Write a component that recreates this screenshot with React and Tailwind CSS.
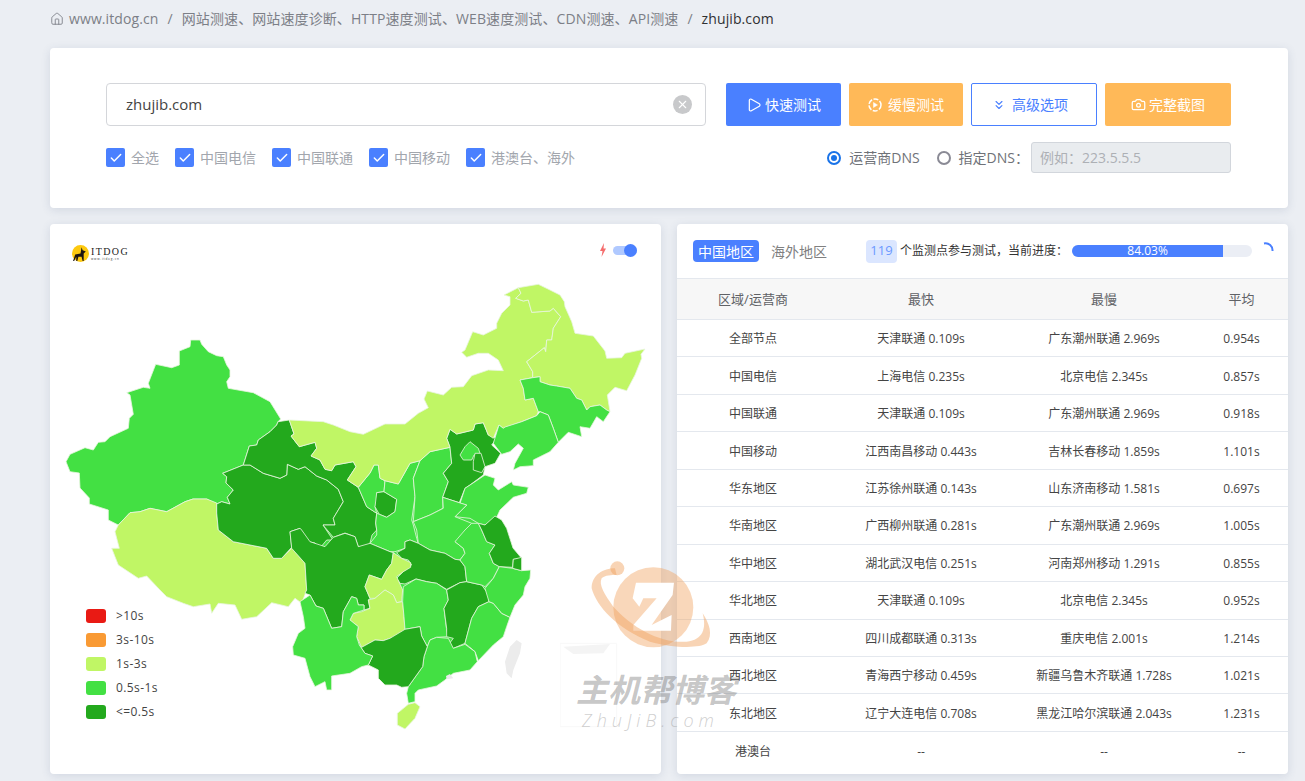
import { Play, ChevronsDown, Camera, House, Check, X } from 'lucide-react'

const DARK = '#23a91d'
const MID = '#43e043'
const LIGHT = '#c0f665'

// provinces, page coordinates
const north = [
  // backing so no slivers of white show between the central provinces
  [MID, '358,487 414,480 450,500 475,515 510,540 513,570 480,640 420,680 350,660 310,610 307,545'],
  [MID, '190.7,340 200,340 201.7,344.3 208.3,351.7 216.7,355.7 223.3,356.7 226.7,365 230,370 230,376.7 226.7,381.7 228.3,388.3 253.3,392.7 270,401.7 280.7,419 278,421.7 276.7,425 270,431.7 258.3,440 256.7,445 249.3,446 243.3,465 222.7,473.3 226.7,476.7 226,483 233.3,490 227.3,497.3 230,504 221.7,501.7 216.7,504 206.7,499 193,499 185,501.7 166.7,511.7 150,508.3 140,511.7 130,512.7 118.3,525 108.3,520 108.3,510 89.3,504 89.3,498 80,488 79.3,473 70,471.7 66,461.7 70,454.3 85,447.7 93.3,450 98.3,442.3 105,441.7 110,436.7 128.3,428.3 129.3,418.3 133.3,414.3 130,395 126.7,392.7 143.3,387.3 150,388.3 148.3,383.3 155.7,364.3 171.7,367.7 179.3,365 179.3,351 190,346.7'],
  [LIGHT, '185,501.7 193,499 206.7,499 216.7,503 216.7,513.3 218.3,530 233.3,541.7 250,545 266.7,548.3 273.3,558.3 281.7,558.3 290,550 291.7,547.3 305,563.3 306.7,590 301.7,603.3 295,598.3 288.3,606.7 271.7,602.7 256.7,616.7 241.7,619.3 235,605 218.3,603.3 211.7,613.3 210,604 193.3,606.7 183.3,603.3 166.7,596.7 160,590 146.7,576 138.3,578.3 118.3,565 115,556.7 111.7,548.3 119.3,548.3 115,531.7 118.3,525 130,512.7 140,511.7 150,508.3 166.7,511.7'],
  [DARK, '222.7,473.3 243.3,465 250,465 263.3,473.3 280,478.3 286.7,475 287.3,464.3 298.3,469.3 305,466.7 316.7,476 326.7,480 338.3,489.3 343.3,501.7 333.3,518.3 335,525 323,525 333,540 326.7,540 320,548 315,543 308,541.7 300,528.3 290,531.7 291.7,547.3 281.7,558.3 273.3,558.3 266.7,548.3 250,545 233.3,541.7 218.3,530 216.7,513 216.7,504 221.7,501.7 230,504 227.3,497.3 233.3,490 226,483 226.7,476.7'],
  [DARK, '278,421.7 289.3,420 294,434 291,436 299.3,446.7 315,442.3 316.7,448.3 311,456 320,460 325,469.3 331.7,470.7 335,465 353.3,461.7 356,466.7 347.3,480 358.3,487.3 366.7,506.7 376.7,513.3 375.7,523 376.7,530 372,535 370,543 366.7,546 358.3,546.7 355,536.7 345,533 333.3,537.3 323,525 335,525 333.3,518.3 343.3,501.7 338.3,489.3 326.7,480 316.7,476 305,466.7 298.3,469.3 287.3,464.3 286.7,475 280,478.3 263.3,473.3 250,465 243.3,465 249.3,446 256.7,445 258.3,440 270,431.7 276.7,425'],
  [MID, '358.3,487.3 370,473 374,465 378.3,465 380,478.3 385,480.7 384,491.7 376.7,492.7 377,500 375,507 376.7,513.3 366.7,506.7'],
  [DARK, '376.7,492.7 384,491.7 396.7,499.3 395,511.7 386.7,517.3 379.3,514.3 375,506.7'],
  [MID, '385,480.7 398.3,484 410,463.3 420,460.7 413.3,478.3 415,496.7 411.7,520 413.3,525 416.7,538.3 418.3,543.3 410,540 405,541.7 405,548.3 395,551.7 390,551.7 370,543.3 376.7,535 376.7,530 375.7,523 376.7,513.3 379.3,514.3 386.7,517.3 395,511.7 396.7,499.3 384,491.7'],
  [MID, '420,460.7 430,451.7 450,447.3 451.7,463.3 443.3,473.3 448.3,481.7 442.7,497.3 443,508.3 430,515 413.3,521.7 415,496.7 413.3,478.3'],
  [DARK, '450,447.3 446.7,438.3 450,429.3 456.7,434 473.3,430 475,424 483.3,422.7 488.3,435 496.7,438.3 491.7,445 500.7,453.3 495,463.3 485,466.7 483.3,475 470,485 465,488.3 459.3,502.7 442.7,497.3 448.3,481.7 443.3,473.3 451.7,463.3'],
  [MID, '470,441.7 478.3,448.3 480,453.3 474,455 471.7,460 463.3,460 460,455 465,446.7'],
  [DARK, '475,453.3 481,453.3 485,466.7 481.7,472.7 473.3,470 473.3,461.7'],
  [LIGHT, '518.3,287.7 504,295 510,296.7 510,305 501.7,313.3 496.7,323.3 496.7,328.3 483.3,335 472.7,331.7 465,350 461.7,352.3 466.7,357.3 478.3,353.3 488.3,353.3 498.3,360 503.3,370.7 488.3,370 471.7,375.7 463.3,386.7 451.7,387.3 443.3,395 427.3,391 424,399 428.3,407.7 418.3,413.3 405,424 385,424 363.3,434.3 350,431.7 333.3,425 323.3,421.7 289.3,420 294,434 291,436 299.3,446.7 315,442.3 316.7,448.3 311,456 320,460 325,469.3 331.7,470.7 335,465 353.3,461.7 356,466.7 347.3,480 358.3,487.3 370,473 374,465 378.3,465 380,478.3 385,480.7 398.3,484 410,463.3 420,460.7 430,451.7 450,447.3 446.7,438.3 450,429.3 456.7,434 473.3,430 475,424 483.3,422.7 488.3,435 493.3,438.3 499,425 503.3,428.3 521.7,421.7 536.7,415.7 538.3,411.7 533.3,398.3 525,400 523.3,388.3 520,380 532.7,377.7 532.7,371.7 526.7,361.7 544.3,347.7 545.7,351.7 546.7,340 551.7,340 553.3,328.3 560.7,316.7 553.3,308.3 550,311 531.7,312.3 528.3,300 523.3,301 515.7,298.3 521,293.3'],
  [LIGHT, '518.3,287.7 538.3,284.3 550,290 560,295 564.3,301.7 565,306.7 571.7,321.7 575,333.3 593.3,336 605,351 606.7,358.3 621.7,357.7 625,353.3 645,349 641,354.3 641.7,358.3 635,375 626.7,390.7 615,387.3 607.3,395 610,411.7 606.7,410 600,405 590,406.7 586.7,410 581.7,400 576.7,398.3 570,388.3 556.7,386 550,385 540,381.7 540,376.7 532.7,377.7 532.7,371.7 526.7,361.7 544.3,347.7 545.7,351.7 546.7,340 551.7,340 553.3,328.3 560.7,316.7 553.3,308.3 550,311 531.7,312.3 528.3,300 523.3,301 515.7,298.3 521,293.3'],
  [MID, '520,380 532.7,377.7 540,376.7 540,381.7 550,385 556.7,386 570,388.3 576.7,398.3 581.7,400 586.7,410 590,406.7 600,405 606.7,410 610,411.7 603.3,421.7 596.7,416.7 590,428.3 580,426.7 581.7,436.7 568.3,432.3 558.3,442.3 553.3,428.3 548.3,415 540,411.7 538.3,411.7 533.3,398.3 525,400 523.3,388.3'],
  [MID, '493.3,443.3 499,425 503.3,428.3 505,427 521.7,421.7 536.7,415.7 540,411.7 548.3,415 553.3,428.3 558.3,442.3 550,451.7 533.3,460 533.3,465.7 520,466.7 513.3,470 515,463.3 523.3,448.3 518.3,444 510,451.7 501.7,454.3'],
  [MID, '470,485 485,475 495,478.3 493.3,485 498.3,490 511.7,481.7 513.3,485 528.3,487.3 526.7,493.3 513.3,497.3 500,510 496.7,517.3 485,525 478.3,523.3 470,518.3 455,516.7 466.7,505 460,503.3 465,488.3'],
  [MID, '413.3,521.7 430,515 443.3,508.3 442.7,497.3 459.3,502.7 466.7,505 455,516.7 471.7,523.3 468,530 460,538.3 455,541.7 463.3,548.3 465,553.3 460,560 455,559.3 445,553.3 430,550 418.3,543.3 416.7,530'],
]

// southern provinces, in crop coordinates (see the transform on their group)
const south = [
  [DARK, '0,5 30,-5 35,0 60,35 105,50 130,22 165,10 195,20 205,50 240,40 300,65 310,68 305,100 290,120 275,148 238,135 225,170 240,205 235,210 240,235 222,240 222,225 205,225 200,205 185,200 160,245 155,290 125,295 100,235 78,228 60,195 45,190 50,180 45,100 5,55'],
  [DARK, '345,55 345,35 360,30 385,40 420,60 465,70 495,88 510,90 525,110 530,155 510,158 470,178 440,160 410,155 378,147 345,162 330,160 320,145 345,120 365,105 355,90 335,85 320,68'],
  [LIGHT, '310,68 335,85 362,98 362,112 340,125 320,140 338,180 335,215 320,218 310,195 285,180 255,205 240,205 225,170 238,135 275,148 290,120 305,100'],
  [LIGHT, '338,215 342,260 345,298 330,315 300,325 280,332 255,330 215,352 200,320 205,290 180,270 190,250 215,245 240,235 235,210 255,205 285,180 310,195 320,218'],
  [MID, '340,170 378,147 410,155 440,160 470,180 475,210 462,235 470,300 475,320 440,322 420,330 412,350 395,318 390,290 345,298 342,260 338,215'],
  [DARK, '470,180 510,158 530,155 575,165 595,192 597,215 565,230 545,265 525,340 490,355 475,345 490,325 470,320 470,295 462,235 475,210'],
  [MID, '597,215 610,220 635,250 660,262 650,290 640,320 610,345 565,392 555,365 525,340 545,265 565,230'],
  [MID, '412,350 420,330 440,322 475,325 490,355 525,343 555,365 562,395 540,420 490,430 465,450 440,468 385,480 375,490 375,515 355,520 350,490 355,470 380,435 398,410 402,380'],
  [DARK, '208,345 215,352 255,330 280,332 300,325 345,298 390,290 395,318 412,350 402,380 398,410 380,435 355,470 335,472 320,465 285,465 265,445 265,420 235,405 248,378 225,370'],
  [MID, '30,215 60,195 78,228 100,235 125,295 155,290 160,245 185,200 200,205 205,225 222,225 222,240 190,250 180,270 205,290 200,320 208,345 225,370 248,378 235,405 215,410 180,430 125,438 125,480 110,480 105,455 75,470 60,440 45,385 10,375 8,350 25,310 45,295 40,260'],
  [MID, '495,35 525,0 545,-20 565,-20 575,0 590,35 615,45 598,70 610,100 628,110 610,145 585,170 575,165 530,155 525,110 510,90 525,70 520,55'],
  [DARK, '565,-20 585,-15 615,-42 635,-30 650,-5 669,54 695,85 670,88 668,112 628,110 610,100 598,70 615,45 590,35 575,0'],
  [MID, '628,110 668,115 695,122 722,120 720,145 705,170 700,195 675,225 660,262 635,250 610,220 597,215 585,175 610,145'],
  [DARK, '695,82 695,122 668,115 670,88'],
  [LIGHT, '355,523 375,518 390,530 375,565 345,597 322,585 322,550'],
]

const legend = [
  ['#e91a14', '>10s'],
  ['#f99a34', '3s-10s'],
  [LIGHT, '1s-3s'],
  [MID, '0.5s-1s'],
  [DARK, '<=0.5s'],
]

const rows = [
  ['全部节点', '天津联通 0.109s', '广东潮州联通 2.969s', '0.954s'],
  ['中国电信', '上海电信 0.235s', '北京电信 2.345s', '0.857s'],
  ['中国联通', '天津联通 0.109s', '广东潮州联通 2.969s', '0.918s'],
  ['中国移动', '江西南昌移动 0.443s', '吉林长春移动 1.859s', '1.101s'],
  ['华东地区', '江苏徐州联通 0.143s', '山东济南移动 1.581s', '0.697s'],
  ['华南地区', '广西柳州联通 0.281s', '广东潮州联通 2.969s', '1.005s'],
  ['华中地区', '湖北武汉电信 0.251s', '河南郑州移动 1.291s', '0.855s'],
  ['华北地区', '天津联通 0.109s', '北京电信 2.345s', '0.952s'],
  ['西南地区', '四川成都联通 0.313s', '重庆电信 2.001s', '1.214s'],
  ['西北地区', '青海西宁移动 0.459s', '新疆乌鲁木齐联通 1.728s', '1.021s'],
  ['东北地区', '辽宁大连电信 0.708s', '黑龙江哈尔滨联通 2.043s', '1.231s'],
  ['港澳台', '--', '--', '--'],
]

const checks = ['全选', '中国电信', '中国联通', '中国移动', '港澳台、海外']

function CheckItem({ label }) {
  return (
    <div className="flex items-center gap-[6px]">
      <span className="flex h-[19px] w-[19px] items-center justify-center rounded-[2px] bg-[#4a80ff]">
        <Check size={14} strokeWidth={2.5} className="text-white" />
      </span>
      <span className="text-[14px] text-[#a2a6ad]">{label}</span>
    </div>
  )
}

function ChinaMap() {
  return (
    <svg viewBox="50 224 611 550" className="block h-[550px] w-[611px]">
      <g stroke="#e8f5e0" strokeWidth="0.8" strokeLinejoin="round">
        {north.map(([fill, points], i) => (
          <polygon key={i} fill={fill} points={points} stroke={i === 0 ? 'none' : undefined} />
        ))}
        <g transform="translate(290 530) scale(0.3333)" strokeWidth="2.4">
          {south.map(([fill, points], i) => (
            <polygon key={i} fill={fill} points={points} />
          ))}
          <polygon fill="#ececec" stroke="none" points="680,330 695,340 690,370 670,420 665,445 650,430 645,395 660,350" />
          <polygon fill="#ececec" stroke="none" points="468,438 480,432 490,445 470,448" />
        </g>
      </g>
    </svg>
  )
}

function Logo() {
  return (
    <div className="absolute left-[22px] top-[21px] flex items-center gap-[2px]">
      <svg viewBox="0 0 16 16" className="h-[17px] w-[17px]">
        <circle cx="8" cy="8" r="8" fill="#fdc90f" />
        <path d="M1 15 L3 9 L8 8 L9 2 L10 5 L13 6 L11 8 L11 15 L10 15 L9 11 L6 11 L5 15 L4 15 L4 11 L2 15 Z" fill="#1c1410" />
      </svg>
      <div className="flex flex-col">
        <span className="font-['Liberation_Serif',serif] text-[10px] leading-[10px] tracking-[1.4px] text-[#222]">ITDOG</span>
        <span className="text-[3px] leading-[4px] tracking-[0.8px] text-[#333]">www.itdog.cn</span>
      </div>
    </div>
  )
}

function Watermark() {
  return (
    <div className="pointer-events-none absolute left-[560px] top-[560px] h-[170px] w-[190px]">
      <svg viewBox="560 560 190 170" className="absolute inset-0 h-[170px] w-[190px]">
        <g transform="translate(350 500) scale(0.3333)">
          <path d="M630,430 H800 V680 H630 Z" fill="none" stroke="#f8f8f8" strokeWidth="3" />
          <path d="M640,440 L780,432 L760,460 L670,462 Z" fill="#f4f4f4" />
          <circle cx="910" cy="322" r="120" fill="rgba(240,160,90,0.42)" />
          <path d="M858,248 L972,248 L968,285 L905,375 L965,345 L963,392 L850,392 L850,375 L920,295 L880,295 L868,320 L848,295 Z" fill="#fff" />
          <path d="M795,205 C760,205 725,225 725,265 C740,320 800,385 900,425 C970,445 1050,445 1070,430 C1090,405 1078,370 1058,340 C1070,385 1060,420 1010,425 C930,430 850,385 790,320 C765,285 745,255 755,235 C765,225 785,225 800,225 Z" fill="rgba(240,160,90,0.45)" />
          <circle cx="802" cy="205" r="21" fill="rgba(240,160,90,0.45)" />
        </g>
      </svg>
      <span className="absolute left-[16px] top-[112px] whitespace-nowrap text-[32px] font-bold italic leading-[36px] text-[rgba(110,110,110,0.4)]">主机帮博客</span>
      <span className="absolute left-[22px] top-[149px] whitespace-nowrap text-[18px] font-light italic leading-[22px] tracking-[5px] text-[rgba(160,160,160,0.5)]">ZhuJiB.com</span>
    </div>
  )
}

export default function App() {
  return (
    <div className="relative h-[781px] overflow-hidden bg-[#ebeef3] pl-[50px] font-['Open_Sans','Noto_Sans_CJK_SC',sans-serif]">
      <div className="flex h-[48px] items-center pb-[11px] text-[14px] tracking-[0.1px] text-[#7c7f87]">
        <House size={14} strokeWidth={1.5} className="mr-[5px]" />
        <span>www.itdog.cn</span>
        <span className="mx-[9px]">/</span>
        <span>网站测速、网站速度诊断、HTTP速度测试、WEB速度测试、CDN测速、API测速</span>
        <span className="mx-[9px]">/</span>
        <span className="text-[#303133]">zhujib.com</span>
      </div>

      <div className="h-[160px] w-[1238px] rounded-[4px] bg-white pl-[56px] pr-[57px] pt-[35px] shadow-[0_2px_10px_rgba(60,80,120,0.14)]">
        <div className="flex gap-[8px]">
          <div className="mr-[12px] flex h-[43px] w-[600px] items-center justify-between rounded-[4px] border border-[#d4d6da] pl-[19px] pr-[13px]">
            <span className="text-[15px] text-[#444]">zhujib.com</span>
            <span className="flex h-[19px] w-[19px] items-center justify-center rounded-full bg-[#c8c9cb]">
              <X size={13} strokeWidth={2} className="text-white" />
            </span>
          </div>
          <button className="flex h-[43px] w-[115px] items-center justify-center gap-[3px] rounded-[2px] bg-[#4a80ff] text-[14px] text-white">
            <Play size={16} strokeWidth={1.8} />快速测试
          </button>
          <button className="flex h-[43px] w-[114px] items-center justify-center gap-[6px] rounded-[2px] bg-[#ffb958] text-[14px] text-white">
            <svg viewBox="0 0 14 14" className="h-[14px] w-[14px]" fill="none" stroke="currentColor" strokeWidth="1.5">
              <circle cx="7" cy="7" r="6" strokeDasharray="5 1.5" />
              <path d="M5.5 4.5 L9.5 7 L5.5 9.5 Z" fill="currentColor" strokeWidth="0.5" />
            </svg>
            缓慢测试
          </button>
          <button className="flex h-[43px] w-[126px] items-center justify-center gap-[6px] rounded-[2px] border border-[#4a80ff] bg-white pr-[8px] text-[14px] text-[#4a80ff]">
            <ChevronsDown size={14} strokeWidth={2} />高级选项
          </button>
          <button className="flex h-[43px] w-[126px] items-center justify-center gap-[3px] rounded-[2px] bg-[#ffb958] text-[14px] text-white">
            <Camera size={15} strokeWidth={2} />完整截图
          </button>
        </div>

        <div className="mt-[16px] flex items-center">
          <div className="flex gap-[16px]">
            {checks.map((label) => (
              <CheckItem key={label} label={label} />
            ))}
          </div>
          <div className="ml-auto flex items-center text-[14px] text-[#6f7278]">
            <span className="mr-[8px] flex h-[14px] w-[14px] items-center justify-center rounded-full border-[2px] border-[#1a73e8]">
              <span className="h-[6px] w-[6px] rounded-full bg-[#1a73e8]" />
            </span>
            <span>运营商DNS</span>
            <span className="ml-[17px] mr-[8px] h-[14px] w-[14px] rounded-full border-[2px] border-[#8a8a95]" />
            <span className="mr-[2px]">指定DNS：</span>
            <span className="flex h-[31px] w-[200px] items-center rounded-[3px] border border-[#d2d6dc] bg-[#e9ecef] pl-[8px] text-[#adb0b5]">例如：223.5.5.5</span>
          </div>
        </div>
      </div>

      <div className="mt-[16px] flex w-[1238px] gap-[16px]">
        <div className="relative h-[550px] w-[611px] rounded-[4px] bg-white shadow-[0_2px_10px_rgba(60,80,120,0.14)]">
          <ChinaMap />
          <Logo />
          <div className="absolute left-[549px] top-[19px] flex items-center gap-[6px]">
            <svg viewBox="0 0 8 14" className="h-[14px] w-[8px]">
              <path d="M5 0 L1 8 L3.5 8 L2.5 14 L7 5.5 L4.5 5.5 Z" fill="#f56c6c" />
            </svg>
            <span className="relative block h-[9px] w-[24px] rounded-full bg-[#b0c9ff]">
              <span className="absolute right-0 top-[-2px] h-[13px] w-[13px] rounded-full bg-[#4a80ff]" />
            </span>
          </div>
          <div className="absolute left-[36px] top-[385px] flex flex-col gap-[10px]">
            {legend.map(([color, label]) => (
              <div key={label} className="flex h-[14px] items-center gap-[10px] text-[12px] tracking-[0.4px] text-[#444]">
                <span className="h-[14px] w-[20px] rounded-[3px]" style={{ backgroundColor: color }} />
                <span>{label}</span>
              </div>
            ))}
          </div>
        </div>

        <div className="h-[550px] w-[611px] overflow-hidden rounded-[4px] bg-white shadow-[0_2px_10px_rgba(60,80,120,0.14)]">
          <div className="flex h-[55px] items-center border-b border-[#e4e8ee] pl-[16px]">
            <span className="flex h-[22px] w-[66px] items-center justify-center rounded-[4px] bg-[#4a80ff] text-[14px] text-white">中国地区</span>
            <span className="ml-[12px] text-[14px] text-[#808080]">海外地区</span>
            <span className="ml-[39px] flex h-[23px] w-[31px] items-center justify-center rounded-[4px] bg-[#dbe6ff] text-[13px] text-[#6c99ff]">119</span>
            <span className="ml-[3px] w-[172px] whitespace-nowrap text-[12px] text-[#333]">个监测点参与测试，当前进度：</span>
            <div className="h-[12px] w-[180px] rounded-[6px] bg-[#ebeef5]">
              <div className="flex h-[12px] w-[84.03%] items-center justify-center rounded-l-[6px] bg-[#4a80ff] text-[12px] leading-[12px] text-white">84.03%</div>
            </div>
            <svg viewBox="0 0 14 14" className="ml-[8px] mt-[-5px] h-[14px] w-[14px]" fill="none">
              <path d="M4 1.5 A7 7 0 0 1 12.5 9" stroke="#4a80ff" strokeWidth="2" />
            </svg>
          </div>
          <div className="grid h-[41px] grid-cols-[152px_184px_182px_93px] items-center border-b border-[#e4e8ee] bg-[#f7f7f7] pt-[2px] text-center text-[13px] text-[#606266]">
            <span>区域/运营商</span>
            <span>最快</span>
            <span>最慢</span>
            <span>平均</span>
          </div>
          {rows.map((row) => (
            <div key={row[0]} className="grid h-[37.45px] grid-cols-[152px_184px_182px_93px] items-center border-b border-[#e4e8ee] pt-[2px] text-center text-[12px] text-[#444] last:border-b-0">
              {row.map((cell, i) => (
                <span key={i}>{cell}</span>
              ))}
            </div>
          ))}
        </div>
      </div>

      <Watermark />
    </div>
  )
}
